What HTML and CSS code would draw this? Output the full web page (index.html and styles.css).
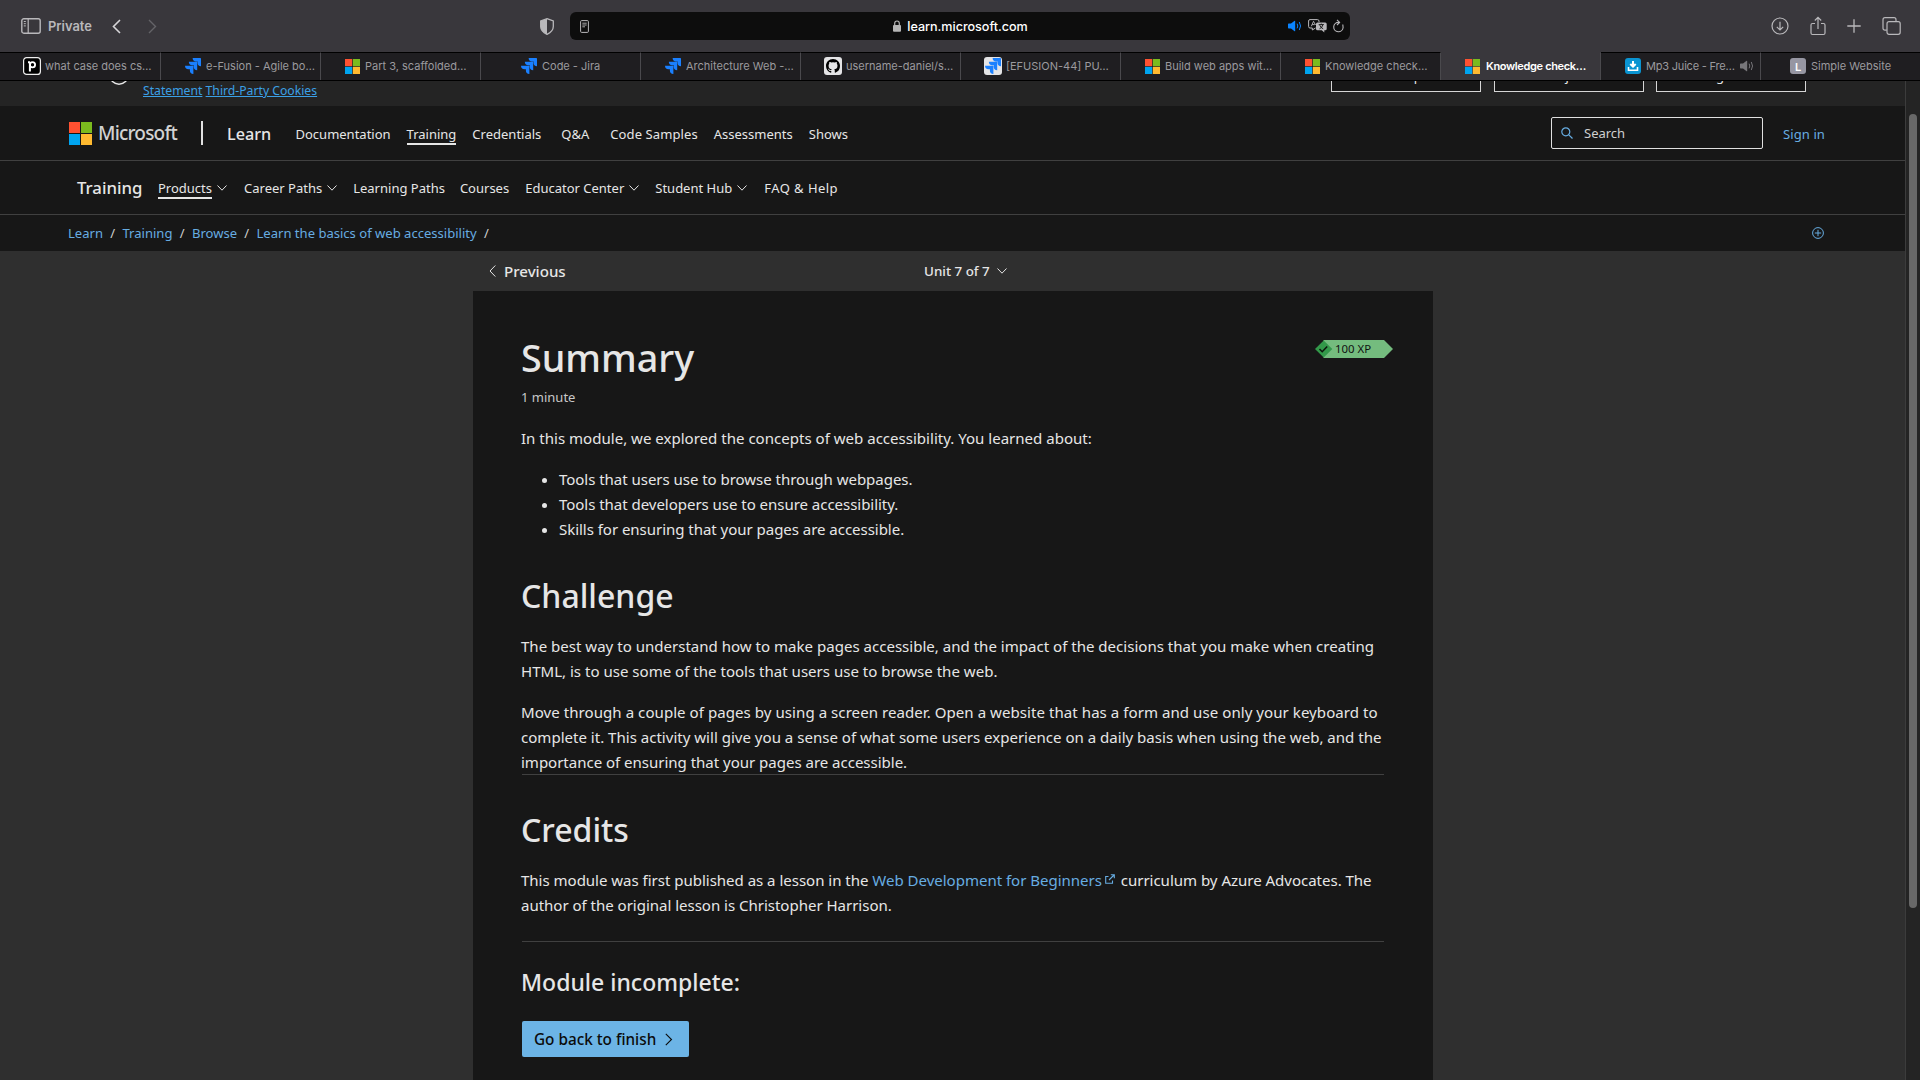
FILE: index.html
```html
<!DOCTYPE html>
<html lang="en">
<head>
<meta charset="utf-8">
<title>Summary - Training | Microsoft Learn</title>
<link rel="stylesheet" href="styles.css">
</head>
<body>
<svg class="defs" width="0" height="0" aria-hidden="true">
  <symbol id="ms" viewBox="0 0 23 23"><path fill="#ff5131" d="M0 0h11v11H0z"/><path fill="#7bbb1e" d="M12 0h11v11H12z"/><path fill="#00a4f0" d="M0 12h11v11H0z"/><path fill="#ffba30" d="M12 12h11v11H12z"/></symbol>
  <symbol id="jira" viewBox="0 0 24 24"><path fill="#1a80ff" d="M11.57 11.51H0a5.22 5.22 0 0 0 5.23 5.22h2.13v2.05A5.22 5.22 0 0 0 12.58 24V12.52a1 1 0 0 0-1.01-1.01zM17.29 5.76H5.74a5.22 5.22 0 0 0 5.21 5.21h2.13v2.06a5.22 5.22 0 0 0 5.22 5.21V6.76a1 1 0 0 0-1.01-1zM23.01 0H11.46a5.22 5.22 0 0 0 5.21 5.22h2.13v2.05A5.22 5.22 0 0 0 24 12.48V1a1 1 0 0 0-.99-1z"/></symbol>
  <symbol id="down" viewBox="0 0 10 6"><path fill="none" stroke="currentColor" d="M.5.5 5 5.2 9.500.5"/></symbol>
  <symbol id="sound" viewBox="0 0 14 12"><path fill="currentColor" d="M0 4.200Q0 3.500.7 3.500H3L6.300.9Q7.200.4 7.200 1.300v9.400q0 .9-.9.4L3 8.500H.7Q0 8.500 0 7.800z"/><path fill="none" stroke="currentColor" stroke-linecap="round" d="M9.300 4q1.200 2 0 4M11.500 2.300q2.300 3.700 0 7.400"/></symbol>
</svg>

<header class="toolbar">
  <div class="tools-left">
    <svg class="i-sidebar" width="20" height="16" viewBox="0 0 20 16" fill="none" stroke="currentColor"><rect x=".8" y=".8" width="18.400" height="14.400" rx="2" stroke-width="1.400"/><path d="M7.200 1v14" stroke-width="1.200"/><path d="M2.800 3.500h2M2.800 5.700h2M2.800 7.900h2"/></svg>
    <span class="private">Private</span>
    <svg class="i-back" width="9" height="15" viewBox="0 0 9 15" fill="none" stroke="currentColor" stroke-width="1.600"><path d="M8 1 1.500 7.500 8 14"/></svg>
    <svg class="i-forward" width="9" height="15" viewBox="0 0 9 15" fill="none" stroke="currentColor" stroke-width="1.400"><path d="M1 1l6.500 6.500L1 14"/></svg>
  </div>
  <svg class="i-shield" width="14" height="17" viewBox="0 0 14 17"><path d="M7 .7 13.300 3v5.500c0 3.800-2.600 6-6.300 7.800C3.300 14.500.7 12.300.7 8.500V3z" fill="none" stroke="currentColor" stroke-width="1.300"/><path d="M7 .7v15.600C3.300 14.500.7 12.300.7 8.500V3z" fill="currentColor"/></svg>
  <div class="urlbar">
    <svg class="i-reader" width="9" height="13" viewBox="0 0 9 13" fill="none" stroke="currentColor"><rect x=".6" y=".6" width="7.800" height="11.800" rx="1"/><path d="M2.300 3.200h4.400M2.300 5h4.400M2.300 6.800h2.700" stroke-width=".9"/></svg>
    <div class="address">
      <svg width="8" height="12" viewBox="0 0 8 12"><rect y="5" width="8" height="6.800" rx="1" fill="currentColor"/><path d="M1.700 5.500V3.300a2.300 2.300 0 0 1 4.600 0v2.200" fill="none" stroke="currentColor" stroke-width="1.200"/></svg>
      <span>learn.microsoft.com</span>
    </div>
    <div class="url-actions">
      <svg class="blue" width="14" height="12"><use href="#sound"/></svg>
      <svg width="19" height="14" viewBox="0 0 19 14"><path d="M2 .6h7.500q1.500 0 1.500 1.500v1M7.500 9 4.300 11V9H2Q.6 9 .6 7.500V2Q.6.600 2 .6" fill="none" stroke="currentColor"/><path d="M3.300 7.300 5.500 2.300 7.500 6M4.200 5.600h2.500" fill="none" stroke="currentColor" stroke-width=".9"/><path d="M9.500 3.500h7.700q1.500 0 1.500 1.500v4.800q0 1.500-1.500 1.500h-.9v2.200l-2.500-2.200H9.500Q8 11.300 8 9.800V5q0-1.500 1.500-1.500z" fill="currentColor"/><path d="M10.700 5.600h5.200M13.300 4.600v1M11.500 9.800q3-1.300 3.300-4M11.800 6.200q.7 2.500 3.400 3.600" fill="none" stroke="#111" stroke-width=".9"/></svg>
      <svg width="11" height="14" viewBox="0 0 11 14" fill="none" stroke="currentColor" stroke-width="1.100"><path d="M9.800 5.500l.3 3A4.700 4.700 0 1 1 5.600 3.400h1"/><path d="M4 .8 6.600 3.400 4 6"/></svg>
    </div>
  </div>
  <div class="tools-right">
    <svg width="18" height="18" viewBox="0 0 18 18" fill="none" stroke="currentColor" stroke-width="1.200"><circle cx="9" cy="9" r="8"/><path d="M9 4.700v8M5.800 9.800 9 13l3.200-3.200"/></svg>
    <svg width="16" height="20" viewBox="0 0 16 20" fill="none" stroke="currentColor" stroke-width="1.200"><path d="M5 7.500H2.500Q1 7.500 1 9v8q0 1.500 1.500 1.500h11Q15 18.500 15 17V9q0-1.500-1.500-1.500H11M8 13V1.500M4.800 4.500 8 1.300l3.200 3.200"/></svg>
    <svg width="14" height="14" viewBox="0 0 14 14" fill="none" stroke="currentColor" stroke-width="1.300"><path d="M7 .3v13.400M.3 7h13.400"/></svg>
    <svg width="19" height="18" viewBox="0 0 19 18" fill="none" stroke="currentColor" stroke-width="1.200"><rect x="5" y="4.700" width="13.200" height="12.600" rx="2"/><path d="M4.800 13.200H3Q1 13.200 1 11.200V2.700Q1 .7 3 .7h9q2 0 2 2v1.800"/></svg>
  </div>
</header>

<nav class="tabs">
  <div class="tab t-wide"><svg width="18" height="18" viewBox="0 0 18 18"><rect x=".6" y=".6" width="16.800" height="16.800" rx="3" fill="#000" stroke="#eee" stroke-width="1.200"/><path d="M6.900 14.500V5.500M5 5.200h2" stroke="#fff" stroke-width="2" fill="none"/><circle cx="9.500" cy="7.800" r="2.600" fill="none" stroke="#fff" stroke-width="1.800"/></svg><span>what case does cs…</span></div>
  <div class="tab t-std"><svg width="16" height="16"><use href="#jira"/></svg><span>e-Fusion - Agile bo…</span></div>
  <div class="tab t-std"><svg width="15" height="15"><use href="#ms"/></svg><span>Part 3, scaffolded…</span></div>
  <div class="tab t-code"><svg width="16" height="16"><use href="#jira"/></svg><span>Code - Jira</span></div>
  <div class="tab t-std"><svg width="16" height="16"><use href="#jira"/></svg><span>Architecture Web -…</span></div>
  <div class="tab t-wide"><svg width="18" height="18" viewBox="0 0 18 18"><rect width="18" height="18" rx="3" fill="#e4e4e6"/><path transform="translate(2 2) scale(.875)" fill="#000" d="M8 0C3.580 0 0 3.580 0 8c0 3.540 2.290 6.530 5.470 7.590.4.070.55-.17.55-.38v-1.490c-2.010.37-2.530-.49-2.690-.94-.09-.23-.48-.94-.82-1.130-.28-.15-.68-.52-.01-.53.63-.01 1.080.58 1.230.82.72 1.210 1.870.87 2.330.66.07-.52.28-.87.510-1.070-1.780-.2-3.640-.89-3.640-3.950 0-.87.310-1.590.82-2.150-.08-.2-.36-1.020.08-2.120 0 0 .67-.21 2.200.82a7.500 7.500 0 0 1 4 0c1.530-1.040 2.200-.82 2.200-.82.44 1.100.16 1.920.08 2.120.51.56.82 1.270.82 2.150 0 3.070-1.870 3.750-3.650 3.950.29.25.54.73.54 1.480v2.200c0 .21.150.46.55.38A8 8 0 0 0 16 8c0-4.420-3.580-8-8-8z"/></svg><span>username-daniel/s…</span></div>
  <div class="tab t-wide"><svg width="18" height="18" viewBox="0 0 18 18"><rect width="18" height="18" rx="3" fill="#e4e4e6"/><use href="#jira" x="1" y="1" width="16" height="16"/></svg><span>[EFUSION-44] PU…</span></div>
  <div class="tab t-std"><svg width="15" height="15"><use href="#ms"/></svg><span>Build web apps wit…</span></div>
  <div class="tab t-std"><svg width="15" height="15"><use href="#ms"/></svg><span>Knowledge check…</span></div>
  <div class="tab t-std active"><svg width="15" height="15"><use href="#ms"/></svg><span>Knowledge check…</span></div>
  <div class="tab t-std"><svg width="16" height="16" viewBox="0 0 16 16"><rect width="16" height="16" rx="3" fill="#0a94d2"/><path d="M8 3v5M5.300 6 8 8.700 10.700 6" fill="none" stroke="#fff" stroke-width="2"/><path d="M3.500 9v3.300h9V9" fill="none" stroke="#fff" stroke-width="1.600"/></svg><span class="juice">Mp3 Juice - Fre…</span><svg class="tab-sound" width="14" height="12"><use href="#sound"/></svg></div>
  <div class="tab t-simple"><i class="letter">L</i><span>Simple Website</span></div>
</nav>

<div class="viewport">
  <div class="page">
    <div class="banner">
      <svg class="info" width="20" height="20" viewBox="0 0 20 20" fill="none" stroke="currentColor" stroke-width="1.400"><circle cx="10" cy="10" r="9.200"/><path d="M10 8.500V15M10 5v1.500"/></svg>
      <p class="cookie-text"><span class="cookie-line">reject optional cookies, only cookies necessary to provide you the services will be used. You may change your selection by clicking “Manage Cookies” at the bottom of the page. <a>Privacy</a></span><br><a>Statement</a> <a>Third-Party Cookies</a></p>
      <div class="cookie-buttons"><button>Accept</button><button>Reject</button><button>Manage cookies</button></div>
    </div>

    <header class="site">
      <svg class="ms-logo" width="23" height="23"><use href="#ms"/></svg>
      <span class="ms-name">Microsoft</span>
      <i class="bar"></i>
      <span class="brand">Learn</span>
      <nav class="links">
        <a>Documentation</a><a class="on">Training</a><a>Credentials</a><a class="qa">Q&amp;A</a><a class="samples">Code Samples</a><a>Assessments</a><a>Shows</a>
      </nav>
      <div class="search"><svg width="12" height="12" viewBox="0 0 12 12" fill="none" stroke="currentColor" stroke-width="1.200"><circle cx="4.800" cy="4.800" r="4"/><path d="m7.800 7.800 3.700 3.700"/></svg><span>Search</span></div>
      <a class="signin">Sign in</a>
    </header>

    <nav class="subnav">
      <span class="area">Training</span>
      <a class="products"><span class="on">Products</span><svg width="10" height="6"><use href="#down"/></svg></a>
      <a><span>Career Paths</span><svg width="10" height="6"><use href="#down"/></svg></a>
      <a class="paths"><span>Learning Paths</span></a>
      <a><span>Courses</span></a>
      <a><span>Educator Center</span><svg width="10" height="6"><use href="#down"/></svg></a>
      <a><span>Student Hub</span><svg width="10" height="6"><use href="#down"/></svg></a>
      <a class="faq"><span>FAQ &amp; Help</span></a>
    </nav>

    <div class="crumbs">
      <a>Learn</a><i>/</i><a>Training</a><i>/</i><a>Browse</a><i>/</i><a>Learn the basics of web accessibility</a><i>/</i>
      <svg width="12" height="12" viewBox="0 0 12 12" fill="none" stroke="currentColor"><circle cx="6" cy="6" r="5.400"/><path d="M6 2.800v6.400M2.800 6h6.400"/></svg>
    </div>

    <div class="unitbar">
      <a class="prev"><svg width="7" height="12" viewBox="0 0 7 12" fill="none" stroke="currentColor"><path d="M6.300.5 1 6l5.300 5.500"/></svg>Previous</a>
      <span class="unit">Unit 7 of 7<svg width="10" height="6"><use href="#down"/></svg></span>
    </div>

    <main class="card">
      <div class="title-row">
        <h1>Summary</h1>
        <div class="xp"><svg width="78" height="18" viewBox="0 0 78 18"><path fill="#74bc7e" d="M8.500 0H69l9 9-9 9H8.500z"/><path fill="#33994a" d="M8.700.4 17.300 9l-8.600 8.600L0 9z"/><path fill="none" stroke="#0c140d" stroke-width="1.500" d="m4.500 9 2.700 2.700 5-5.200"/></svg><span>100 XP</span></div>
      </div>
      <p class="time">1 minute</p>
      <p>In this module, we explored the concepts of web accessibility. You learned about:</p>
      <ul>
        <li>Tools that users use to browse through webpages.</li>
        <li>Tools that developers use to ensure accessibility.</li>
        <li>Skills for ensuring that your pages are accessible.</li>
      </ul>
      <h2>Challenge</h2>
      <p>The best way to understand how to make pages accessible, and the impact of the decisions that you make when creating<br>HTML, is to use some of the tools that users use to browse the web.</p>
      <p><span class="loose">Move through a couple of pages by using a screen reader. Open a website that has a form and use only your keyboard to</span><br>complete it. This activity will give you a sense of what some users experience on a daily basis when using the web, and the<br><span class="snug">importance of ensuring that your pages are accessible.</span></p>
      <hr class="tight">
      <h2 class="credits">Credits</h2>
      <p class="snug">This module was first published as a lesson in the <a>Web Development for Beginners<svg class="ext" width="10" height="10" viewBox="0 0 10 10" fill="none" stroke="currentColor" stroke-width="1.100"><path d="M3.500 2.500H.7v6.800h6.800V6.500M4 6l5-5M5.800.7h3.500v3.500"/></svg></a> curriculum by Azure Advocates. The<br>author of the original lesson is Christopher Harrison.</p>
      <hr>
      <h3>Module incomplete:</h3>
      <button class="primary">Go back to finish<svg width="8" height="13" viewBox="0 0 8 13" fill="none" stroke="currentColor" stroke-width="1.100"><path d="m.8.800 5.700 5.700-5.700 5.700"/></svg></button>
    </main>
  </div>
  <div class="scrollbar"><i></i></div>
</div>
</body>
</html>
```
FILE: styles.css
```css
* { box-sizing: border-box; }
body {
  margin: 0;
  height: 1080px;
  overflow: hidden;
  display: flex;
  flex-direction: column;
  background: #2f2f2f;
  color: #e6e6e6;
  font: 13px "Noto Sans", "Open Sans", sans-serif;
}
svg { flex: none; display: block; }
i { font-style: normal; }
p, h1, h2, h3, ul { margin: 0; }
.defs { position: absolute; }

/* Browser toolbar */
.toolbar {
  height: 52px;
  flex: none;
  display: flex;
  align-items: center;
  background: #39373c;
  color: #b9b8bb;
  font-family: Inter, sans-serif;
}
.tools-left { width: 540px; padding-left: 21px; display: flex; align-items: center; }
.private { margin: 0 19px 0 7px; width: 45px; font-size: 12.900px; font-weight: 600; }
.i-back { color: #d6d5d8; margin-right: 27px; }
.i-forward { color: #646368; }
.urlbar {
  width: 780px;
  height: 28px;
  margin-left: 16px;
  padding: 0 6px 0 10px;
  border-radius: 6px;
  background: #0d0d0d;
  display: grid;
  grid-template-columns: 1fr auto 1fr;
  align-items: center;
}
.address { display: flex; align-items: center; gap: 6px; margin-right: 3px; color: #b5b5b5; }
.address span { color: #fff; font-size: 12.600px; font-weight: 500; letter-spacing: -.03px; }
.url-actions { display: flex; align-items: center; justify-content: flex-end; gap: 6px; }
.url-actions .blue { color: #0a84ff; }
.tools-right { margin-left: auto; padding-right: 19px; display: flex; align-items: center; gap: 21px; }

/* Tab strip */
.tabs {
  height: 29px;
  flex: none;
  display: grid;
  grid-template-columns: 161px repeat(10, 160px) 159px;
  border-bottom: 1px solid #000;
  background: #1f1e21;
  font-family: Inter, sans-serif;
}
.tab {
  display: flex;
  align-items: center;
  gap: 5px;
  border-top: 1px solid #000;
  border-right: 1px solid #4a494d;
  padding-bottom: 1px;
  color: #9b9a9e;
  font-size: 11px;
  white-space: nowrap;
}
.tab:last-child { border-right: 0; }
.t-std { padding-left: 24px; }
.t-wide { padding-left: 23px; gap: 4px; }
.t-code { padding-left: 40px; }
.t-simple { padding-left: 29px; }
.active { background: #39373c; border-top-color: #39373c; color: #fff; font-weight: 600; letter-spacing: -.35px; gap: 6px; }
.juice { letter-spacing: -.2px; }
.tab-sound { color: #77767a; }
.letter {
  width: 16px;
  height: 16px;
  border-radius: 3px;
  background: #9696a2;
  color: #fff;
  font-size: 11px;
  font-weight: 600;
  line-height: 18px;
  text-align: center;
}

/* Page viewport */
.viewport { flex: 1; min-height: 0; display: flex; }
.page { width: 1905px; overflow: hidden; }
.scrollbar { width: 15px; border-left: 1px solid #3c3c3c; background: #242424; padding: 33px 3px 0; }
.scrollbar i { display: block; width: 8px; height: 794px; border-radius: 4px; background: #686868; }

.banner {
  height: 25px;
  overflow: hidden;
  background: #242424;
  display: flex;
  align-items: flex-end;
  padding: 0 99px 0 109px;
}
.info { margin-bottom: 21px; }
.cookie-text { margin: 0 0 7px 14px; font-size: 12.200px; line-height: 17px; white-space: nowrap; }
.cookie-line { letter-spacing: -.05px; }
.cookie-text a { color: #3ba0e6; text-decoration: underline; }
.cookie-line a { text-decoration: none; }
.cookie-buttons { margin: 0 0 14px auto; display: flex; gap: 12.500px; }
.cookie-buttons button {
  width: 150px;
  height: 32px;
  border: 1px solid #d6d6d6;
  background: #171717;
  color: #e6e6e6;
  font: 13px "Noto Sans", sans-serif;
}

.site {
  height: 55px;
  border-bottom: 1px solid #404040;
  background: #171717;
  display: flex;
  align-items: center;
  padding: 0 80px 0 69px;
}
.ms-name { margin: 0 0 0 6px; width: 103px; font-size: 19px; font-weight: 500; letter-spacing: -.8px; color: #d2d2d2; }
.bar { width: 2px; height: 24px; margin-top: -1px; background: #e0e0e0; }
.brand { margin-left: 24px; width: 68.500px; padding-top: 1px; font-size: 16.200px; font-weight: 500; }
.links { display: flex; gap: 16px; padding-top: 2px; }
.links a { line-height: 20px; }
.links .qa { margin: 0 5px 0 4px; }
.links .samples { letter-spacing: .1px; }
.on { position: relative; }
.on::after { content: ""; position: absolute; left: 0; right: 0; bottom: -1px; height: 2px; background: #e6e6e6; }
.search {
  width: 212px;
  height: 32px;
  margin-left: auto;
  border: 1px solid #e0e0e0;
  border-radius: 2px;
  display: flex;
  align-items: center;
  gap: 11px;
  padding-left: 9px;
  color: #cfcfcf;
}
.search svg { color: #67ade2; }
.signin { margin: 2px 0 0 20px; color: #67ade2; letter-spacing: .1px; }

.subnav {
  height: 54px;
  border-bottom: 1px solid #404040;
  background: #171717;
  display: flex;
  align-items: center;
  gap: 16px;
  padding-left: 77px;
}
.area { font-size: 16.800px; font-weight: 500; width: 65px; }
.subnav a { display: flex; align-items: center; gap: 5px; padding-top: 1px; }
.subnav a span { line-height: 20px; }
.subnav .products { margin-right: 1px; }
.subnav .paths { margin-right: -1px; }
.subnav .faq { margin-left: 1px; letter-spacing: .45px; }

.crumbs {
  height: 36px;
  background: #171717;
  display: flex;
  align-items: center;
  padding: 0 81px 0 68px;
  color: #67ade2;
}
.crumbs a { font-size: 13.050px; }
.crumbs i { width: 19.500px; text-align: center; color: #cfcfcf; }
.crumbs svg { margin-left: auto; }

.unitbar { width: 960px; height: 40px; margin-left: 473px; display: flex; align-items: center; }
.prev { width: 451px; padding-left: 16px; display: flex; align-items: center; gap: 8px; font-size: 15.100px; font-weight: 500; }
.unit { display: flex; align-items: center; gap: 7px; font-size: 13.400px; font-weight: 500; }

/* Unit content */
.card {
  width: 960px;
  height: 800px;
  margin-left: 473px;
  padding: 42px 40px 0 48px;
  background: #171717;
  font-size: 15.050px;
  line-height: 25px;
  white-space: nowrap;
}
.card p, .card ul { margin-bottom: 16px; }
.card a { color: #67ade2; }
.loose { letter-spacing: .05px; }
.snug { letter-spacing: -.03px; }
.title-row { display: flex; justify-content: space-between; align-items: flex-start; }
h1 { font-size: 37.700px; line-height: 49px; margin-bottom: 1px; font-weight: 500; }
.xp { position: relative; margin-top: 7px; }
.xp span { position: absolute; left: 20px; top: 0; font-size: 11.400px; line-height: 18px; color: #111; }
.card .time { margin: 4px 0 19px; font-size: 13px; line-height: 20px; color: #c8c8c8; }
ul { padding-left: 38px; letter-spacing: -.05px; }
h2 { margin: 33px 0 17px; font-size: 32px; line-height: 42px; font-weight: 500; }
hr { width: 862px; height: 1px; border: 0; margin: 23px 0 25px 1px; background: #404040; }
hr.tight { margin: -17px 0 0 1px; }
.credits { margin-top: 34px; }
.ext { display: inline-block; margin: 0 2px 2px 3px; }
h3 { font-size: 23px; line-height: 30px; font-weight: 500; }
.primary {
  width: 167px;
  height: 36px;
  margin: 24px 0 0 1px;
  padding: 0 0 0 12px;
  border: 0;
  border-radius: 2px;
  background: #6cb4e6;
  color: #0b0b0b;
  display: flex;
  align-items: center;
  gap: 9px;
  font: 500 15.300px "Noto Sans", sans-serif;
}
```
